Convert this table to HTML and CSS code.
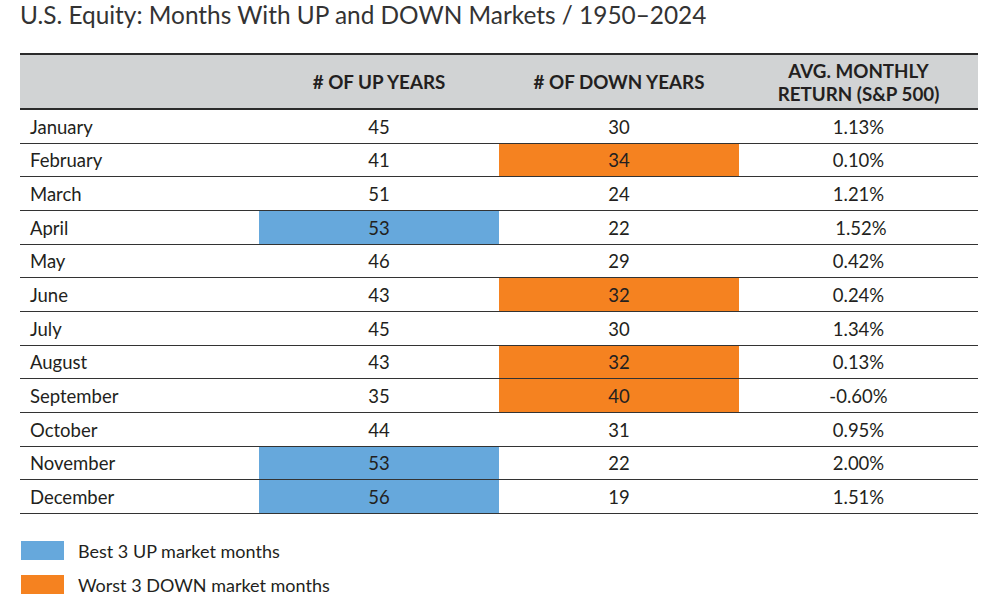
FILE: index.html
```html
<!DOCTYPE html>
<html>
<head>
<meta charset="utf-8">
<link rel="stylesheet" href="styles.css">
</head>
<body>
<div class="page">
  <h1 class="title">U.S. Equity: Months With UP and DOWN Markets / 1950–2024</h1>
  <table class="grid">
    <colgroup><col class="c1"><col class="c2"><col class="c3"><col class="c4"></colgroup>
    <thead>
      <tr><th></th><th># OF UP YEARS</th><th># OF DOWN YEARS</th><th>AVG. MONTHLY<br>RETURN (S&amp;P 500)</th></tr>
    </thead>
    <tbody>
      <tr><td class="m">January</td><td>45</td><td>30</td><td>1.13%</td></tr>
      <tr><td class="m">February</td><td>41</td><td class="down">34</td><td>0.10%</td></tr>
      <tr><td class="m">March</td><td>51</td><td>24</td><td>1.21%</td></tr>
      <tr><td class="m">April</td><td class="up">53</td><td>22</td><td>&nbsp;1.52%</td></tr>
      <tr><td class="m">May</td><td>46</td><td>29</td><td>0.42%</td></tr>
      <tr><td class="m">June</td><td>43</td><td class="down">32</td><td>0.24%</td></tr>
      <tr><td class="m">July</td><td>45</td><td>30</td><td>1.34%</td></tr>
      <tr><td class="m">August</td><td>43</td><td class="down">32</td><td>0.13%</td></tr>
      <tr><td class="m">September</td><td>35</td><td class="down">40</td><td>-0.60%</td></tr>
      <tr><td class="m">October</td><td>44</td><td>31</td><td>0.95%</td></tr>
      <tr><td class="m">November</td><td class="up">53</td><td>22</td><td>2.00%</td></tr>
      <tr><td class="m">December</td><td class="up">56</td><td>19</td><td>1.51%</td></tr>
    </tbody>
  </table>
  <div class="legend">
    <div class="item"><span class="sw sw-up"></span><span>Best 3 UP market months</span></div>
    <div class="item"><span class="sw sw-down"></span><span>Worst 3 DOWN market months</span></div>
  </div>
</div>
</body>
</html>
```
FILE: styles.css
```css
html, body { margin: 0; padding: 0; background: #fff; }
body { font-family: Lato, "Open Sans", "Liberation Sans", sans-serif; color: #231f20; }
.page { padding: 1px 22px 0 20px; width: 958px; }
.title { margin: 0; font-size: 24.4px; font-weight: 400; line-height: 28px; color: #333; }
.grid { margin-top: 24px; width: 958px; border-collapse: collapse; table-layout: fixed; font-size: 18.5px; }
.c1 { width: 239px; } .c2 { width: 240px; } .c3 { width: 240px; } .c4 { width: 239px; }
.grid thead th { background: #d1d3d4; height: 53px; padding: 0; font-weight: 700; font-size: 18.8px; line-height: 23px; text-align: center; border-top: 2px solid #2b2b2b; border-bottom: 2px solid #2b2b2b; color: #231f20; }
.grid tbody td { height: 31.67px; padding: 1px 0 0; text-align: center; border-bottom: 1px solid #333; line-height: 20px; }
.grid tbody td.m { text-align: left; padding-left: 10px; }
.grid td.up { background: #66a8dc; }
.grid td.down { background: #f58220; }
.legend { margin-top: 27px; display: flex; flex-direction: column; gap: 14px; }
.item { display: flex; align-items: center; gap: 14px; font-size: 18px; height: 20px; }
.sw { width: 43px; height: 19px; display: inline-block; margin-left: 1px; }
.sw-up { background: #66a8dc; }
.sw-down { background: #f58220; }
```
